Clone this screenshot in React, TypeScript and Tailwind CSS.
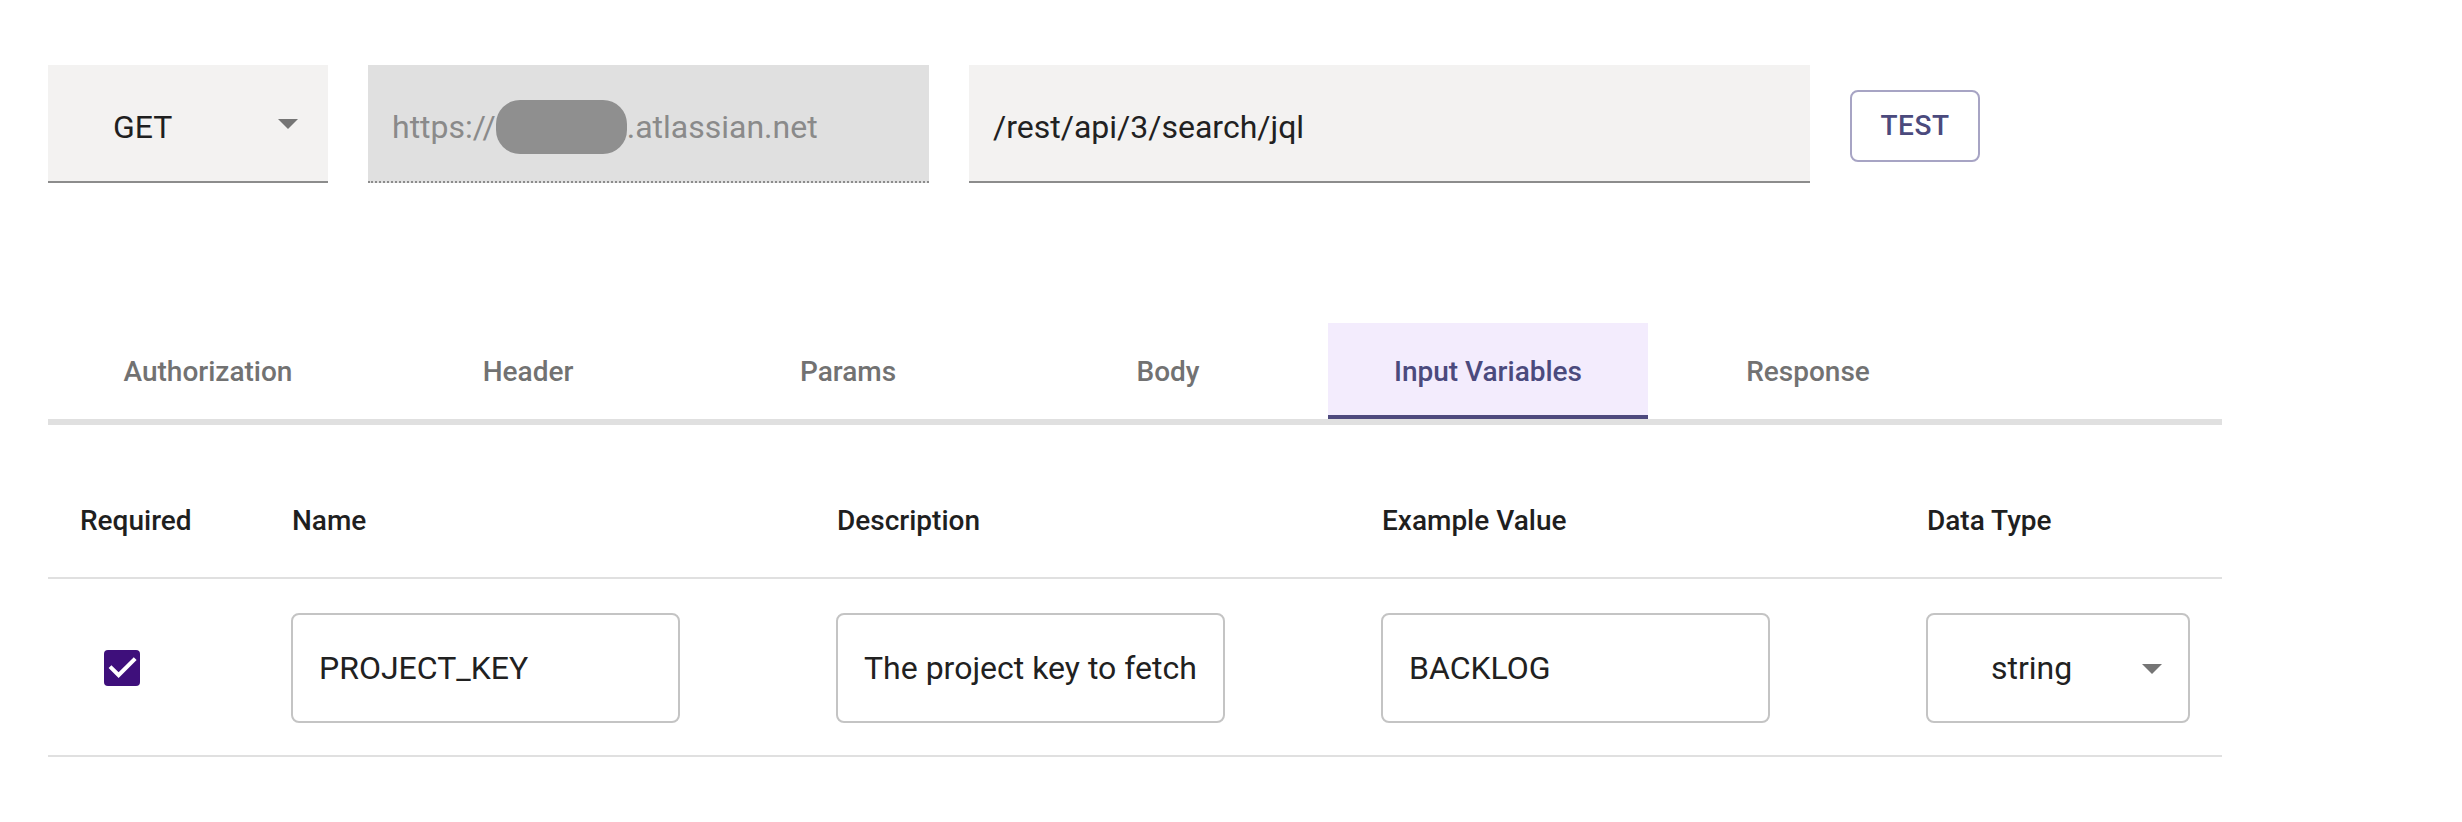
import React from "react";

const Arrow = () => (
  <svg width="48" height="48" viewBox="0 0 24 24" className="shrink-0">
    <path d="M7 10l5 5 5-5z" fill="#757575" />
  </svg>
);

const tabs = ["Authorization", "Header", "Params", "Body", "Input Variables", "Response"];

export default function App() {
  return (
    <div
      className="min-h-[822px] w-[2462px] bg-white pl-[48px] pt-[65px] text-[#212121]"
      style={{ fontFamily: "Roboto, 'Noto Sans', Arial, sans-serif" }}
    >
      {/* Request row */}
      <div className="flex items-center gap-[40px]">
        <div className="flex h-[118px] w-[280px] items-center justify-between border-b-2 border-[#8c8c8c] bg-[#f3f2f1] pl-[65px] pr-[16px]">
          <span className="mt-[8px] text-[32px] leading-none text-[#1f1f1f]">GET</span>
          <Arrow />
        </div>
        <div className="flex h-[118px] w-[561px] items-center border-b-2 border-dotted border-[#8c8c8c] bg-[#e0e0e0] pl-[24px] pt-[8px]">
          <span className="text-[32px] leading-none text-[#8a8a8a]">https://</span>
          <span className="inline-block h-[54px] w-[131px] rounded-[24px] bg-[#8f8f8f]" />
          <span className="text-[32px] leading-none text-[#8a8a8a]">.atlassian.net</span>
        </div>
        <div className="flex h-[118px] w-[841px] items-center border-b-2 border-[#8c8c8c] bg-[#f3f2f1] pl-[24px] pt-[8px]">
          <span className="text-[32px] leading-none text-[#212121]">/rest/api/3/search/jql</span>
        </div>
        <button className="mt-[4px] flex h-[72px] w-[130px] items-center justify-center rounded-[8px] border-2 border-[#a7a4c4] text-[28px] font-medium uppercase tracking-[0.5px] text-[#4b4a7d]">
          Test
        </button>
      </div>

      {/* Tabs */}
      <div className="mt-[140px] w-[2174px] border-b-[6px] border-[#e0e0e0]">
        <div className="flex">
          {tabs.map((t) => {
            const active = t === "Input Variables";
            return (
              <div
                key={t}
                className={
                  active
                    ? "flex h-[96px] w-[320px] items-center justify-center border-b-4 border-[#4e4a7e] bg-[#f3ecfd] pt-[6px] text-[28px] font-medium text-[#4b4a7d]"
                    : "flex h-[96px] w-[320px] items-center justify-center border-b-4 border-transparent pt-[6px] text-[28px] font-medium text-[#727272]"
                }
              >
                {t}
              </div>
            );
          })}
        </div>
      </div>

      {/* Table */}
      <div className="mt-[40px] w-[2174px]">
        <div className="grid h-[114px] grid-cols-[212px_545px_545px_545px_1fr] items-center border-b-2 border-[#e0e0e0] text-[28px] font-medium text-[#1f1f1f]">
          <div className="pl-[32px]">Required</div>
          <div className="pl-[32px]">Name</div>
          <div className="pl-[32px]">Description</div>
          <div className="pl-[32px]">Example Value</div>
          <div className="pl-[32px]">Data Type</div>
        </div>
        <div className="grid h-[178px] grid-cols-[212px_545px_545px_545px_1fr] items-center border-b-2 border-[#e0e0e0] pt-[2px]">
          <div className="pl-[32px]">
            <svg width="48" height="48" viewBox="0 0 24 24" className="ml-[18px]">
              <rect x="3" y="3" width="18" height="18" rx="2" fill="#3e0f7b" />
              <path d="M10 17l-5-5 1.41-1.41L10 14.17l7.59-7.59L19 8l-9 9z" fill="#ffffff" transform="translate(0.3 0)" />
            </svg>
          </div>
          <div className="pl-[31px]">
            <input
              readOnly
              value="PROJECT_KEY"
              className="h-[110px] w-[389px] rounded-[8px] border-2 border-[#c4c4c4] bg-white px-[26px] text-[32px] text-[#212121] outline-none"
            />
          </div>
          <div className="pl-[31px]">
            <input
              readOnly
              value="The project key to fetch issues from"
              className="h-[110px] w-[389px] rounded-[8px] border-2 border-[#c4c4c4] bg-white px-[26px] text-[32px] text-[#212121] outline-none"
            />
          </div>
          <div className="pl-[31px]">
            <input
              readOnly
              value="BACKLOG"
              className="h-[110px] w-[389px] rounded-[8px] border-2 border-[#c4c4c4] bg-white px-[26px] text-[32px] text-[#212121] outline-none"
            />
          </div>
          <div className="pl-[31px]">
            <div className="flex h-[110px] w-[264px] items-center justify-between rounded-[8px] border-2 border-[#c4c4c4] bg-white pl-[63px] pr-[12px]">
              <span className="text-[32px] leading-none text-[#212121]">string</span>
              <Arrow />
            </div>
          </div>
        </div>
      </div>
    </div>
  );
}
